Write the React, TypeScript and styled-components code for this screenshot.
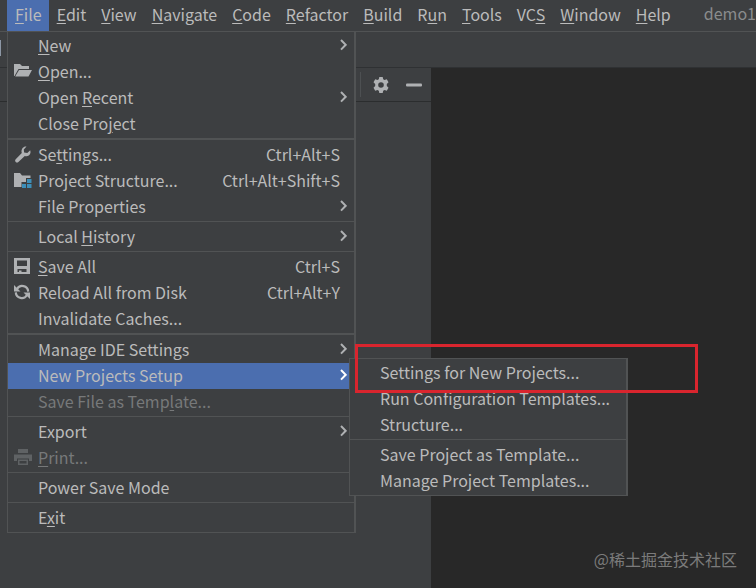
import React from 'react';
import styled, { createGlobalStyle, css } from 'styled-components';

const GlobalStyle = createGlobalStyle`
  * { box-sizing: border-box; }
  body {
    margin: 0;
    background: #3d3f41;
    color: #bbbbbb;
    font-family: 'Noto Sans CJK SC', 'Noto Sans', sans-serif;
    font-size: 16px;
    overflow: hidden;
  }
  button { font: inherit; color: inherit; background: none; border: 0; margin: 0; padding: 0; }
  ul { list-style: none; margin: 0; padding: 0; }
`;

const Window = styled.div`
  position: relative;
  display: flex;
  flex-direction: column;
  min-height: 100vh;
`;

const MenuBar = styled.nav`
  display: flex;
  height: 32px;
  padding-left: 7px;
  border-bottom: 1px solid #515354;
  white-space: nowrap;
`;

const MenuAnchor = styled.div`
  position: relative;
  display: flex;
`;

const BarItem = styled.button<{ $open?: boolean }>`
  padding: 0 7px 4px 8px;
  background: ${p => (p.$open ? '#4b6eaf' : 'transparent')};
`;

const ProjectTitle = styled.span`
  margin-left: 26px;
  line-height: 26px;
  color: #8a8c8d;
`;

const Key = styled.span`
  text-decoration: underline;
  text-decoration-thickness: 1px;
  text-underline-offset: 2px;
`;

const Toolbar = styled.div`
  display: flex;
  align-items: center;
  height: 35px;
`;

const ToolbarTile = styled.div`
  width: 1px;
  height: 16px;
  margin-bottom: 3px;
  background: #8d97a5;
`;

const Workspace = styled.main`
  flex: 1;
  display: flex;
  border-top: 1px solid #2f3133;
`;

const ToolWindow = styled.section`
  width: 431px;
  flex: none;
`;

const ToolHeader = styled.header`
  display: flex;
  justify-content: flex-end;
  align-items: center;
  gap: 17px;
  height: 34px;
  padding-right: 9px;
  border-bottom: 1px solid #2b2d2e;
`;

const HeaderDivider = styled.span`
  width: 1px;
  height: 25px;
  margin-right: -5px;
  background: #4d5052;
`;

const IconButton = styled.button`
  display: flex;
`;

const Editor = styled.section`
  flex: 1;
  background: #282828;
`;

const Popup = styled.ul`
  position: absolute;
  background: #3d3f41;
  border: 1px solid #515354;
  border-right-width: 2px;
  white-space: nowrap;
`;

const FileMenu = styled(Popup)`
  top: 31px;
  left: 0;
  width: 349px;
`;

const SubMenu = styled(Popup)`
  top: -5px;
  left: 341px;
  width: 279px;
  color: #bbbbbb;
`;

const Group = styled.li<{ $heavy?: boolean }>`
  padding: 2px 0 1px;
  border-top: ${p => (p.$heavy ? 2 : 1)}px solid #515354;

  &:first-child {
    padding-top: 1px;
    border-top: 0;
  }
`;

const Row = styled.li`
  position: relative;
`;

const Entry = styled.button<{ $active?: boolean; $disabled?: boolean }>`
  display: flex;
  align-items: center;
  width: 100%;
  height: 26px;
  padding: 0 7px 2px 6px;
  text-align: left;
  ${p => p.$active && css`background: #4b6eaf;`}
  ${p => p.$disabled && css`color: #77797a;`}
`;

const IconSlot = styled.span`
  display: flex;
  width: 24px;
  flex: none;
`;

const Label = styled.span`
  flex: 1;
`;

const Shortcut = styled.span`
  margin-right: 7px;
`;

const Highlight = styled.li`
  position: absolute;
  top: -15px;
  left: 5px;
  width: 343px;
  height: 49px;
  border: 3px solid #d9252e;
  pointer-events: none;
`;

const Watermark = styled.div`
  position: absolute;
  right: 19px;
  bottom: 17px;
  font-size: 16px;
  line-height: 24px;
  color: #7b7b7b;
`;

const FolderOpen = () => (
  <svg width="18" height="16" viewBox="0 0 18 16" fill="#afb1b3">
    <path d="M0 1h6l2 2h7v3H4.500L.5 13H0z" />
    <path d="M5 7h13l-3.500 6.500H1.200z" />
  </svg>
);
const Wrench = () => (
  <svg width="17" height="17" viewBox="0 0 17 17" fill="#afb1b3">
    <path d="M12.500.6 9.800 3.400l.3 3.200 3.200.4 2.900-2.800c.8 2.300.1 4.100-1.400 5.200-1.200.9-2.600 1-4 .5L4.400 15.900c-.8.8-1.900.8-2.700.1-.8-.8-.8-1.900 0-2.700l6.100-6.200C7.200 5.400 7.500 3.500 8.600 2.100 9.700.8 11.100.2 12.500.6z" />
  </svg>
);
const Structure = () => (
  <svg width="19" height="17" viewBox="0 0 19 17">
    <path d="M0 1h6l2 2.500h8.500V6H12v4H7.500v5H0z" fill="#afb1b3" />
    <path d="M13 7h4.500v4H13zM8 12h4v4H8zM13 12h4.500v4H13z" fill="#3d8fb9" />
  </svg>
);
const Floppy = () => (
  <svg width="16" height="16" viewBox="0 0 16 16" fill="#afb1b3" fillRule="evenodd">
    <path d="M0 0h16v16H0zM3 2.500V8h10V2.500zM3.500 11v3H5v-1.500h2.500V14h5V11z" />
  </svg>
);
const Reload = () => (
  <svg width="16" height="16" viewBox="0 0 16 16" fill="none" stroke="#afb1b3" strokeWidth="2.200">
    <path d="M3 5A6 6 0 0 1 14.200 7.600M13 11A6 6 0 0 1 1.800 8.400" />
    <path d="M0 1v6.500h6.500zM16 15V8.500H9.500z" fill="#afb1b3" stroke="none" />
  </svg>
);
const Printer = () => (
  <svg width="18" height="17" viewBox="0 0 18 17" fillRule="evenodd" fill="#5f6264">
    <path d="M4 0h10v4H4zM0 5.500h18V12h-3V9.500H3V12H0zM4 10.500h10V16H4zM5.500 12v2.500h7V12z" />
  </svg>
);
const Chevron = ({ active }: { active?: boolean }) => (
  <svg width="7" height="12" viewBox="0 0 7 12" fill="none" stroke={active ? '#fff' : '#afb1b3'} strokeWidth="2">
    <path d="M1 1l4.700 4.800L1 10.600" />
  </svg>
);
const Gear = () => (
  <svg width="16" height="16" viewBox="0 0 16 16" fill="#afb1b3" fillRule="evenodd">
    <path d="M6.300 0h3.400l.5 2.300 1.300.8 2.300-.8 1.700 3-1.700 1.600v2.200l1.700 1.600-1.700 3-2.300-.8-1.300.8-.5 2.300H6.300l-.5-2.300-1.300-.8-2.300.8-1.700-3 1.700-1.600V6.900L.5 5.300l1.700-3 2.300.8 1.300-.8zM8 5.200a2.800 2.800 0 1 0 0 5.600 2.800 2.800 0 0 0 0-5.600z" />
  </svg>
);
const Minimize = () => (
  <svg width="16" height="16" viewBox="0 0 16 16">
    <rect y="6.500" width="16" height="3" rx="1" fill="#afb1b3" />
  </svg>
);

/* An ampersand marks the mnemonic letter that follows it. */
const Mnemonic = ({ text }: { text: string }) => {
  const at = text.indexOf('&');
  if (at < 0) return <>{text}</>;
  return (
    <>
      {text.slice(0, at)}
      <Key>{text[at + 1]}</Key>
      {text.slice(at + 2)}
    </>
  );
};

type Item = {
  text: string;
  icon?: React.ReactNode;
  keys?: string;
  more?: boolean;
  disabled?: boolean;
  children?: Section[];
};
type Section = { heavy?: boolean; items: Item[] };

const newProjects: Section[] = [
  { items: [{ text: 'Settings for New Projects...' }, { text: 'Run Configuration Templates...' }, { text: 'Structure...' }] },
  { items: [{ text: 'Save Project as Template...' }, { text: 'Manage Project Templates...' }] },
];

const fileMenu: Section[] = [
  {
    items: [
      { text: '&New', more: true },
      { text: '&Open...', icon: <FolderOpen /> },
      { text: 'Open &Recent', more: true },
      { text: 'Close Pro&ject' },
    ],
  },
  {
    heavy: true,
    items: [
      { text: 'Se&ttings...', icon: <Wrench />, keys: 'Ctrl+Alt+S' },
      { text: 'Project Structure...', icon: <Structure />, keys: 'Ctrl+Alt+Shift+S' },
      { text: 'File Properties', more: true },
    ],
  },
  { items: [{ text: 'Local &History', more: true }] },
  {
    items: [
      { text: '&Save All', icon: <Floppy />, keys: 'Ctrl+S' },
      { text: 'Reload All from Disk', icon: <Reload />, keys: 'Ctrl+Alt+Y' },
      { text: 'Invalidate Caches...' },
    ],
  },
  {
    heavy: true,
    items: [
      { text: 'Manage IDE Settings', more: true },
      { text: 'New Projects Setup', more: true, children: newProjects },
      { text: 'Save File as Temp&late...', disabled: true },
    ],
  },
  { items: [{ text: 'Export', more: true }, { text: '&Print...', icon: <Printer />, disabled: true }] },
  { items: [{ text: 'Power Save Mode' }] },
  { items: [{ text: 'E&xit' }] },
];

const barItems = ['&Edit', '&View', '&Navigate', '&Code', '&Refactor', '&Build', 'R&un', '&Tools', 'VC&S', '&Window', '&Help'];

const Sections = ({ sections }: { sections: Section[] }) => (
  <>
    {sections.map((section, i) => (
      <Group key={i} $heavy={section.heavy}>
        <ul>
          {section.items.map(item => (
            <Row key={item.text}>
              <Entry $active={!!item.children} $disabled={item.disabled} disabled={item.disabled}>
                <IconSlot>{item.icon}</IconSlot>
                <Label><Mnemonic text={item.text} /></Label>
                {item.keys && <Shortcut>{item.keys}</Shortcut>}
                {item.more && <Chevron active={!!item.children} />}
              </Entry>
              {item.children && (
                <SubMenu>
                  <Sections sections={item.children} />
                  <Highlight aria-hidden="true" />
                </SubMenu>
              )}
            </Row>
          ))}
        </ul>
      </Group>
    ))}
  </>
);

export default function App() {
  return (
    <Window>
      <GlobalStyle />
      <MenuBar>
        <MenuAnchor>
          <BarItem $open><Mnemonic text="&File" /></BarItem>
          <FileMenu>
            <Sections sections={fileMenu} />
          </FileMenu>
        </MenuAnchor>
        {barItems.map(text => (
          <BarItem key={text}><Mnemonic text={text} /></BarItem>
        ))}
        <ProjectTitle>demo1</ProjectTitle>
      </MenuBar>
      <Toolbar><ToolbarTile /></Toolbar>
      <Workspace>
        <ToolWindow>
          <ToolHeader>
            <HeaderDivider />
            <IconButton aria-label="Settings"><Gear /></IconButton>
            <IconButton aria-label="Hide"><Minimize /></IconButton>
          </ToolHeader>
        </ToolWindow>
        <Editor />
      </Workspace>
      <Watermark>@稀土掘金技术社区</Watermark>
    </Window>
  );
}
